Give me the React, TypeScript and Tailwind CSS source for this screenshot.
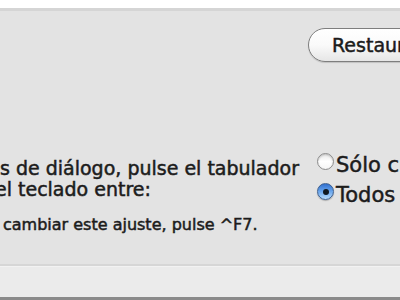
import React from "react";

const font = "font-['DejaVu_Sans',sans-serif]";

const Radio = ({ checked, label }: { checked?: boolean; label: string }) => (
  <div className="flex h-[30px] items-start gap-[2px]">
    {checked ? (
      <span className="mt-[2px] flex h-[17px] w-[17px] shrink-0 items-center justify-center rounded-full border border-[#3d5f8f] bg-linear-to-b from-[#2f6fd0] via-[#6aa6ec] to-[#b9dcfb] shadow-[0_1px_1px_rgba(0,0,0,0.25)]">
        <span className="h-[6px] w-[6px] rounded-full bg-[#101820]" />
      </span>
    ) : (
      <span className="mt-[2px] h-[17px] w-[17px] shrink-0 rounded-full border border-[#8c8c8c] bg-linear-to-b from-[#e9e9e9] via-white to-[#f6f6f6] shadow-[inset_0_1px_2px_rgba(0,0,0,0.2)]" />
    )}
    <span className="mt-[4px] whitespace-nowrap text-[21px] leading-[20px] text-[#1c1c1c] [-webkit-text-stroke:0.5px_#1c1c1c]">
      {label}
    </span>
  </div>
);

export default function App() {
  return (
    <div className={`flex h-[300px] w-[400px] flex-col overflow-hidden bg-white ${font}`}>
      <div className="h-[8px] shrink-0 bg-white" />
      <div className="h-[3px] shrink-0 bg-[#d5d5d5]" />

      {/* main panel */}
      <div className="flex h-[253px] shrink-0 flex-col overflow-hidden bg-[#e3e3e3]">
        <div className="ml-[308px] mt-[17px] flex h-[34px] w-[130px] shrink-0 items-center rounded-full border-[1.5px] border-[#7e7e7e] bg-linear-to-b from-white via-[#fafafa] to-[#e6e6e6] pl-[23px] shadow-[0_1px_1px_rgba(0,0,0,0.15)]">
          <span className="whitespace-nowrap text-[19px] leading-[20px] text-[#1c1c1c] [-webkit-text-stroke:0.5px_#1c1c1c]">
            Restaurar
          </span>
        </div>

        <div className="mt-[89px] flex">
          <div className="w-[317px] shrink-0 overflow-hidden pt-[7px] text-[#1c1c1c] [-webkit-text-stroke:0.5px_#1c1c1c]">
            <div className="whitespace-nowrap text-[19px] leading-[20px]">
              s de diálogo, pulse el tabulador
            </div>
            <div className="-ml-[5px] mt-[1px] whitespace-nowrap text-[19px] leading-[20px]">
              el teclado entre:
            </div>
            <div className="ml-[3px] mt-[16px] whitespace-nowrap text-[16px] leading-[20px]">
              cambiar este ajuste, pulse ^F7.
            </div>
          </div>
          <div className="flex flex-col">
            <Radio label="Sólo cuadros de texto" />
            <Radio checked label="Todos los controles" />
          </div>
        </div>
      </div>

      {/* bottom band */}
      <div className="h-[2px] shrink-0 bg-[#d6d6d6]" />
      <div className="h-[1px] shrink-0 bg-[#f2f2f2]" />
      <div className="flex-1 bg-[#ebebeb]" />
      <div className="h-[3px] shrink-0 bg-[#8a8a8a]" />
    </div>
  );
}
